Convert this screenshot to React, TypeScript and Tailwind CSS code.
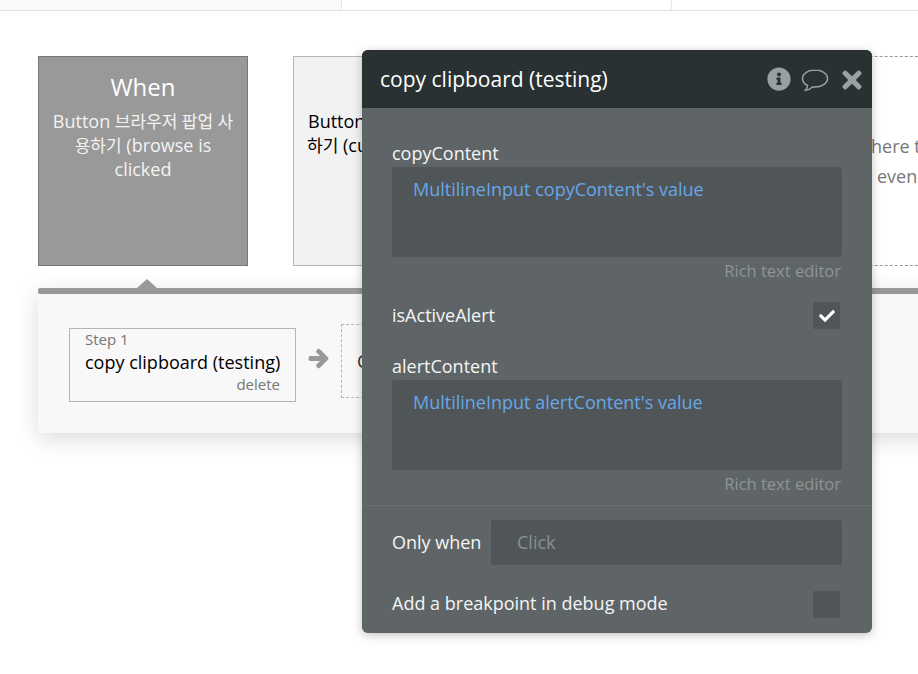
import { FaArrowRight, FaCheck, FaInfoCircle, FaTimes } from "react-icons/fa";

const font = "font-['Open_Sans','Noto_Sans_CJK_KR',sans-serif]";

function Field({ label, value }: { label: string; value: string }) {
  return (
    <div>
      <div className="h-[26px] text-[18px] leading-[24px] text-[#f4f5f5]">{label}</div>
      <div className="h-[90px] rounded-[2px] bg-[#505557] pl-[21px] pt-[10px] text-[18px] leading-[24px] text-[#67a7e8]">
        {value}
      </div>
      <div className="mt-[4px] h-[20px] pr-px text-right text-[16.5px] leading-[20px] text-[#8f9496]">Rich text editor</div>
    </div>
  );
}

function Checkbox({ checked }: { checked?: boolean }) {
  return (
    <div className="flex h-[27px] w-[27px] items-center justify-center rounded-[2px] bg-[#505557] text-[16px] text-white">
      {checked && <FaCheck />}
    </div>
  );
}

function Popup() {
  return (
    <div className="absolute left-[362px] top-[50px] w-[510px] overflow-hidden rounded-[6px] bg-[#5f6567] shadow-[0_2px_10px_rgba(0,0,0,0.25)]">
      <div className="flex h-[58px] items-center justify-between bg-[#2a3133] pl-[18px] pr-[6px]">
        <span className="pt-px text-[21px] text-white">copy clipboard (testing)</span>
        <div className="flex items-center text-[#98a0a1]">
          <FaInfoCircle className="-mt-px text-[24px]" />
          <svg className="ml-[10px] mt-[3px]" width="28" height="25" viewBox="0 0 28 25" fill="none" stroke="currentColor" strokeWidth="1.5">
            <path d="M14 2C7.4 2 1.5 5.4 1.5 10.5c0 3 2.1 5.500 5 7 0 1.800-.8 3.400-2 4.800 2.700-.3 5.200-1.600 6.900-3.400 .9 .1 1.700 .2 2.600 .2 6.600 0 12.500-3.600 12.500-8.600S20.600 2 14 2z" />
          </svg>
          <FaTimes className="ml-[9px] mt-[2px] text-[28px]" />
        </div>
      </div>
      <div className="px-[30px] pt-[33px]">
        <Field label="copyContent" value="MultilineInput copyContent's value" />
        <div className="mt-[21px] flex h-[27px] items-center justify-between pr-[2px] text-[18px] text-[#f4f5f5]">
          <span className="-mt-px">isActiveAlert</span>
          <Checkbox checked />
        </div>
        <div className="mt-[25px]">
          <Field label="alertContent" value="MultilineInput alertContent's value" />
        </div>
      </div>
      <div className="mt-[11px] h-px bg-[#686e70]" />
      <div className="px-[30px] pb-[15px] pt-[14px]">
        <div className="flex h-[45px] items-center text-[18px] text-[#f4f5f5]">
          <span className="w-[99px] shrink-0">Only when</span>
          <div className="flex h-full flex-1 items-center rounded-[2px] bg-[#505557] pl-[26px] text-[#8b9092]">Click</div>
        </div>
        <div className="mt-[26px] flex h-[27px] items-center justify-between pr-[2px] text-[18px] text-[#f4f5f5]">
          <span className="-mt-[3px]">Add a breakpoint in debug mode</span>
          <Checkbox />
        </div>
      </div>
    </div>
  );
}

export default function App() {
  return (
    <div className={`${font} relative h-[674px] w-[918px] overflow-hidden bg-white`}>
      {/* top tabs */}
      <div className="flex h-[11px] border-b border-[#e1e1e1]">
        <div className="w-[342px] border-r border-[#e8e8e8] bg-[#f9f9f9]" />
        <div className="w-[330px] border-r border-[#e8e8e8]" />
      </div>

      {/* event cards */}
      <div className="flex pl-[38px] pt-[45px]">
        <div className="h-[210px] w-[210px] shrink-0 border border-[#777] bg-[#999] px-[10px] pt-[13px] text-center text-white">
          <div className="text-[24px] leading-[34px]">When</div>
          <div className="mt-[5px] text-[18px] leading-[24px] text-[#f3f3f3]">
            Button <span className="text-[17px] leading-none">브라우저 팝업 사용하기</span> (browse is clicked
          </div>
        </div>
        <div className="ml-[45px] h-[210px] w-[210px] shrink-0 whitespace-nowrap border border-[#b5b5b5] bg-[#f2f2f2] pl-[14px] pt-[52px] text-[18px] leading-[24px] text-black">
          <div>Button 브라우저 팝업 사용</div>
          <div className="-ml-px">
            <span className="text-[17px] leading-none">하기</span> (cut is clicked
          </div>
        </div>
        <div className="ml-[45px] h-[210px] w-[400px] shrink-0 whitespace-nowrap border border-dashed border-[#999] pl-[322px] pt-[77px] text-[18px] leading-[24px] text-[#777]">
          <div>here t</div>
          <div className="ml-[6px] mt-[6px]">even</div>
        </div>
      </div>

      {/* action row */}
      <div className="relative ml-[38px] mt-[22px] h-[145px] w-[900px] bg-[#f8f8f8] shadow-[0_6px_22px_rgba(0,0,0,0.14)]">
        <div className="absolute -top-[9px] left-[99px] h-0 w-0 border-x-[10px] border-b-[9px] border-x-transparent border-b-[#999]" />
        <div className="h-[6px] rounded-l-[2px] bg-[#999]" />
        <div className="flex items-start pl-[31px] pt-[30px]">
          <div className="mt-[4px] h-[74px] w-[227px] shrink-0 border border-[#b5b5b5] px-[15px] pt-px">
            <div className="text-[15px] leading-[18px] text-[#777]">Step 1</div>
            <div className="mt-[2px] whitespace-nowrap text-[18px] leading-[24px] text-black">copy clipboard (testing)</div>
            <div className="text-right text-[15px] leading-[20px] text-[#777]">delete</div>
          </div>
          <FaArrowRight stroke="currentColor" strokeWidth={36} className="ml-[12px] mt-[24px] shrink-0 text-[21px] text-[#999]" />
          <div className="ml-[12px] h-[74px] w-[200px] shrink-0 border border-dashed border-[#b5b5b5] pl-[15px] pt-[24px] text-[18px] leading-[24px] text-[#333]">C</div>
        </div>
      </div>

      <Popup />
    </div>
  );
}
